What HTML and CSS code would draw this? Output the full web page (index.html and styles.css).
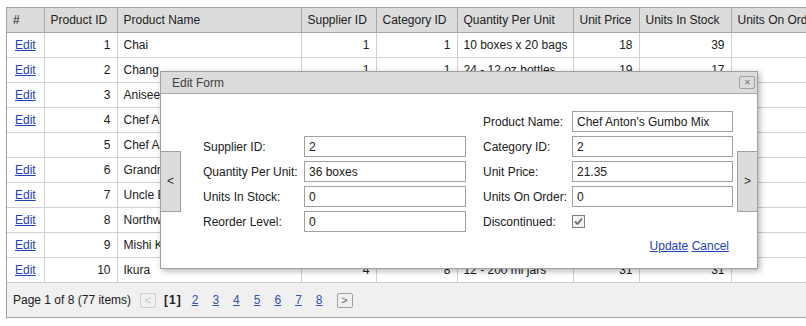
FILE: index.html
```html
<!DOCTYPE html>
<html lang="en">
<head>
    <meta charset="UTF-8">
    <title>Products</title>
    <link rel="stylesheet" href="styles.css">
</head>
<body>
    <div class="grid">
        <table class="grid-table">
            <colgroup>
                <col style="width: 37px">
                <col style="width: 73px">
                <col style="width: 184px">
                <col style="width: 75px">
                <col style="width: 81px">
                <col style="width: 116px">
                <col style="width: 66px">
                <col style="width: 92px">
                <col style="width: 104px">
                <col style="width: 96px">
                <col style="width: 91px">
            </colgroup>
            <thead>
                <tr>
                    <th>#</th>
                    <th>Product ID</th>
                    <th>Product Name</th>
                    <th>Supplier ID</th>
                    <th>Category ID</th>
                    <th>Quantity Per Unit</th>
                    <th>Unit Price</th>
                    <th>Units In Stock</th>
                    <th>Units On Order</th>
                    <th>Reorder Level</th>
                    <th>Discontinued</th>
                </tr>
            </thead>
            <tbody>
                <tr><td><a href="#">Edit</a></td><td class="num">1</td><td>Chai</td><td class="num">1</td><td class="num">1</td><td>10 boxes x 20 bags</td><td class="num">18</td><td class="num">39</td><td class="num">0</td><td class="num">10</td><td></td></tr>
                <tr><td><a href="#">Edit</a></td><td class="num">2</td><td>Chang</td><td class="num">1</td><td class="num">1</td><td>24 - 12 oz bottles</td><td class="num">19</td><td class="num">17</td><td class="num">40</td><td class="num">25</td><td></td></tr>
                <tr><td><a href="#">Edit</a></td><td class="num">3</td><td>Aniseed Syrup</td><td class="num">1</td><td class="num">2</td><td>12 - 550 ml bottles</td><td class="num">10</td><td class="num">13</td><td class="num">70</td><td class="num">25</td><td></td></tr>
                <tr><td><a href="#">Edit</a></td><td class="num">4</td><td>Chef Anton's Cajun Seasoning</td><td class="num">2</td><td class="num">2</td><td>48 - 6 oz jars</td><td class="num">22</td><td class="num">53</td><td class="num">0</td><td class="num">0</td><td></td></tr>
                <tr><td></td><td class="num">5</td><td>Chef Anton's Gumbo Mix</td><td class="num">2</td><td class="num">2</td><td>36 boxes</td><td class="num">21.35</td><td class="num">0</td><td class="num">0</td><td class="num">0</td><td></td></tr>
                <tr><td><a href="#">Edit</a></td><td class="num">6</td><td>Grandma's Boysenberry Spread</td><td class="num">3</td><td class="num">2</td><td>12 - 8 oz jars</td><td class="num">25</td><td class="num">120</td><td class="num">0</td><td class="num">25</td><td></td></tr>
                <tr><td><a href="#">Edit</a></td><td class="num">7</td><td>Uncle Bob's Organic Dried Pears</td><td class="num">3</td><td class="num">7</td><td>12 - 1 lb pkgs.</td><td class="num">30</td><td class="num">15</td><td class="num">0</td><td class="num">10</td><td></td></tr>
                <tr><td><a href="#">Edit</a></td><td class="num">8</td><td>Northwoods Cranberry Sauce</td><td class="num">3</td><td class="num">2</td><td>12 - 12 oz jars</td><td class="num">40</td><td class="num">6</td><td class="num">0</td><td class="num">0</td><td></td></tr>
                <tr><td><a href="#">Edit</a></td><td class="num">9</td><td>Mishi Kobe Niku</td><td class="num">4</td><td class="num">6</td><td>18 - 500 g pkgs.</td><td class="num">97</td><td class="num">29</td><td class="num">0</td><td class="num">0</td><td></td></tr>
                <tr><td><a href="#">Edit</a></td><td class="num">10</td><td>Ikura</td><td class="num">4</td><td class="num">8</td><td>12 - 200 ml jars</td><td class="num">31</td><td class="num">31</td><td class="num">0</td><td class="num">0</td><td></td></tr>
            </tbody>
        </table>
        <div class="pager">
            <span class="pager-summary">Page 1 of 8 (77 items)</span>
            <span class="pager-btn disabled">&lt;</span>
            <b class="pager-current">[1]</b>
            <a href="#">2</a>
            <a href="#">3</a>
            <a href="#">4</a>
            <a href="#">5</a>
            <a href="#">6</a>
            <a href="#">7</a>
            <a href="#">8</a>
            <span class="pager-btn">&gt;</span>
        </div>
    </div>

    <div class="popup">
        <div class="popup-header">
            <span>Edit Form</span>
            <span class="popup-close">&#x2715;</span>
        </div>
        <div class="popup-body">
            <button type="button" class="nav-btn nav-prev">&lt;</button>
            <form class="edit-form">
                <div class="form-grid">
                    <span></span><span></span><span></span>
                    <label>Product Name:</label>
                    <input type="text" value="Chef Anton's Gumbo Mix">

                    <label>Supplier ID:</label>
                    <input type="text" value="2">
                    <span></span>
                    <label>Category ID:</label>
                    <input type="text" value="2">

                    <label>Quantity Per Unit:</label>
                    <input type="text" value="36 boxes">
                    <span></span>
                    <label>Unit Price:</label>
                    <input type="text" value="21.35">

                    <label>Units In Stock:</label>
                    <input type="text" value="0">
                    <span></span>
                    <label>Units On Order:</label>
                    <input type="text" value="0">

                    <label>Reorder Level:</label>
                    <input type="text" value="0">
                    <span></span>
                    <label>Discontinued:</label>
                    <span class="check">
                        <svg width="11" height="11" viewBox="0 0 11 11"><path d="M2 5.5 L4.5 8 L9 2.5" fill="none" stroke="#6a6a6a" stroke-width="1.8"/></svg>
                    </span>
                </div>
                <div class="form-actions">
                    <a href="#">Update</a>
                    <a href="#">Cancel</a>
                </div>
            </form>
            <button type="button" class="nav-btn nav-next">&gt;</button>
        </div>
    </div>
</body>
</html>
```

FILE: styles.css
```css
body {
    font-family: "Liberation Sans", Arial, sans-serif;
    font-size: 12px;
    color: #202020;
    margin: 0;
    padding: 7px 6px;
    background-color: #fff;
    overflow: hidden;
    width: 1100px;
}
a {
    color: #1e40b8;
}
.grid {
    width: 1040px;
    border: 1px solid #a0a0a0;
}
.grid-table {
    border-collapse: collapse;
    table-layout: fixed;
    width: 1015px;
}
.grid-table th {
    background-color: #dcdcdc;
    font-weight: normal;
    text-align: left;
    height: 24px;
    padding: 0 6px;
    border-right: 1px solid #a8a8a8;
    border-bottom: 1px solid #a8a8a8;
    white-space: nowrap;
}
.grid-table td {
    height: 24px;
    padding: 0 6px;
    border-right: 1px solid #d0d0d0;
    border-bottom: 1px solid #d0d0d0;
    white-space: nowrap;
    overflow: hidden;
}
.grid-table td.num {
    text-align: right;
}
.grid-table td:first-child a {
    margin-left: 2px;
}
.pager {
    display: flex;
    align-items: center;
    height: 34px;
    padding-left: 6px;
    background-color: #f0f0f0;
}
.pager a {
    color: #3450b0;
    margin-right: 14px;
}
.pager-summary {
    margin-right: 9px;
}
.pager-btn {
    display: inline-flex;
    align-items: center;
    justify-content: center;
    width: 14px;
    height: 13px;
    border: 1px solid #a0a0a0;
    border-radius: 2px;
    color: #666;
    font-size: 11px;
}
.pager-btn.disabled {
    border-color: #d0d0d0;
    color: #c0c0c0;
    margin-right: 8px;
}
.pager-current {
    margin-right: 10px;
    letter-spacing: 1px;
}

.popup {
    position: absolute;
    left: 160px;
    top: 71px;
    width: 598px;
    height: 198px;
    box-sizing: border-box;
    background: #fff;
    border: 1px solid #a0a0a0;
    box-shadow: 2px 2px 6px rgba(0, 0, 0, 0.3);
}
.popup-header {
    display: flex;
    align-items: center;
    justify-content: space-between;
    height: 21px;
    padding: 0 2px 0 11px;
    background-color: #dcdcdc;
    border-bottom: 1px solid #a8a8a8;
    color: #404040;
}
.popup-close {
    display: inline-flex;
    align-items: center;
    justify-content: center;
    width: 14px;
    height: 11px;
    border: 1px solid #a0a0a0;
    border-radius: 2px;
    font-size: 8px;
    color: #707070;
}
.popup-body {
    display: flex;
    align-items: center;
    height: 174px;
}
.nav-btn {
    width: 21px;
    height: 61px;
    padding: 0;
    background-color: #dcdcdc;
    border: 1px solid #a0a0a0;
    font-family: inherit;
    font-size: 12px;
    color: #303030;
}
.nav-prev {
    margin-left: -1px;
}
.nav-next {
    margin-right: -1px;
}
.edit-form {
    align-self: flex-start;
    padding: 17px 4px 0 22px;
    margin: 0;
}
.form-grid {
    display: grid;
    grid-template-columns: 101px 162px 17px 89px 161px;
    grid-auto-rows: 21px;
    row-gap: 4px;
    align-items: center;
}
.form-grid input {
    height: 21px;
    box-sizing: border-box;
    width: 100%;
    margin: 0;
    padding: 0 4px;
    border: 1px solid #a0a0a0;
    font-family: inherit;
    font-size: 12px;
    color: #202020;
}
.check {
    display: inline-flex;
    align-items: center;
    justify-content: center;
    width: 11px;
    height: 11px;
    border: 1px solid #808080;
    background: #f4f4f4;
}
.form-actions {
    text-align: right;
    margin-top: 7px;
    padding-right: 4px;
}
```
